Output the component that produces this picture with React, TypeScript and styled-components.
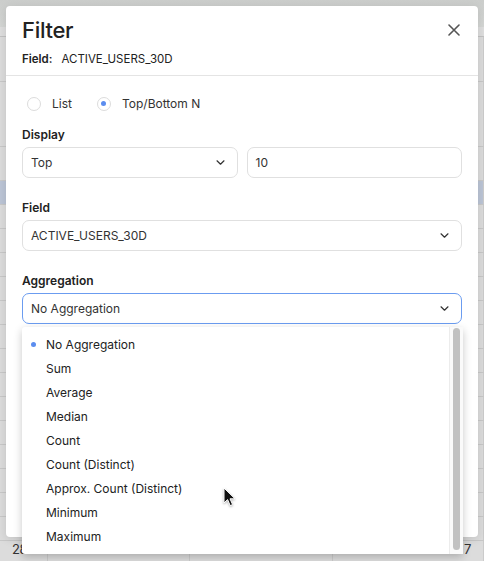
import styled, { createGlobalStyle } from 'styled-components';

const aggregations = [
  'No Aggregation',
  'Sum',
  'Average',
  'Median',
  'Count',
  'Count (Distinct)',
  'Approx. Count (Distinct)',
  'Minimum',
  'Maximum',
];

// rows of the sheet sitting behind the dialog
const sheetRows: { height: number; tone?: 'blue'; first?: string; last?: string }[] = [
  { height: 44 },
  { height: 64 },
  { height: 33 },
  { height: 23, tone: 'blue' },
  { height: 23 },
  { height: 23 },
  { height: 23 },
  { height: 23 },
  { height: 23 },
  { height: 23 },
  { height: 23 },
  { height: 23 },
  { height: 23 },
  { height: 23 },
  { height: 23 },
  { height: 23 },
  { height: 23 },
  { height: 23 },
  { height: 23, first: '2847', last: '7' },
];

const GlobalStyle = createGlobalStyle`
  html, body {
    margin: 0;
    padding: 0;
    background: #dcdcdc;
    font-family: Inter, 'Liberation Sans', sans-serif;
    color: #1f1f1f;
  }
`;

function Chevron() {
  return (
    <svg width="9" height="5" viewBox="0 0 9 5" fill="none">
      <path
        d="M1 0.8l3.5 3.4 3.5-3.4"
        stroke="#333"
        strokeWidth="1.2"
        strokeLinecap="round"
        strokeLinejoin="round"
      />
    </svg>
  );
}

export default function App() {
  return (
    <Screen>
      <GlobalStyle />
      <Sheet>
        <Toolbar />
        {sheetRows.map((row, i) => (
          <SheetRow key={i} $tone={row.tone} style={{ height: row.height }}>
            <Cell>{row.first}</Cell>
            <Cell />
            <Cell />
            <Cell $align="right">{row.last}</Cell>
          </SheetRow>
        ))}
      </Sheet>

      <Dialog>
        <Header>
          <TitleRow>
            <Title>Filter</Title>
            <CloseButton aria-label="Close">
              <svg width="12" height="12" viewBox="0 0 12 12">
                <path
                  d="M1 1l10 10M11 1L1 11"
                  stroke="#555"
                  strokeWidth="1.6"
                  strokeLinecap="round"
                />
              </svg>
            </CloseButton>
          </TitleRow>
          <FieldLine>
            <strong>Field:</strong>
            <span>ACTIVE_USERS_30D</span>
          </FieldLine>
        </Header>

        <Body>
          <Radios>
            <RadioOption>
              <Radio />
              List
            </RadioOption>
            <RadioOption>
              <Radio $checked />
              Top/Bottom N
            </RadioOption>
          </Radios>

          <Group>
            <Label>Display</Label>
            <Pair>
              <Select>
                Top
                <Chevron />
              </Select>
              <Select>10</Select>
            </Pair>
          </Group>

          <Group>
            <Label>Field</Label>
            <Select>
              ACTIVE_USERS_30D
              <Chevron />
            </Select>
          </Group>

          <Group>
            <Label>Aggregation</Label>
            <MenuAnchor>
              <Select $focused>
                No Aggregation
                <Chevron />
              </Select>
              <Menu>
                <MenuItems>
                  {aggregations.map((name, i) => (
                    <MenuItem key={name} $selected={i === 0}>
                      {name}
                    </MenuItem>
                  ))}
                </MenuItems>
                <ScrollTrack>
                  <ScrollThumb />
                </ScrollTrack>
              </Menu>
            </MenuAnchor>
          </Group>
        </Body>
      </Dialog>

      <Pointer width="14" height="20" viewBox="0 0 14 20">
        <path
          d="M1 1v15l3.6-3.4 2.6 6 2.4-1-2.6-5.8H12z"
          fill="#111"
          stroke="#fff"
          strokeWidth="1"
          strokeLinejoin="round"
        />
      </Pointer>
    </Screen>
  );
}

const Screen = styled.div`
  position: relative;
  width: 484px;
  height: 561px;
  overflow: hidden;
`;

const Sheet = styled.div`
  display: flex;
  flex-direction: column;
`;

const Toolbar = styled.div`
  height: 36px;
  border-bottom: 1px solid #c2c2c2;
  background: linear-gradient(#cbcdcb 0, #d4d6d4 27px, #dedede 27px);
`;

const SheetRow = styled.div<{ $tone?: 'blue' }>`
  display: grid;
  grid-template-columns: 48px 142px 143px 1fr;
  border-bottom: 1px solid #c8c8c8;
  background: ${(p) => (p.$tone === 'blue' ? '#bcc5d6' : '#dcdcdc')};
`;

const Cell = styled.div<{ $align?: 'right' }>`
  border-right: 1px solid #cbcbcb;
  font-size: 13px;
  line-height: 14px;
  letter-spacing: -0.4px;
  color: #333;
  padding: 1px ${(p) => (p.$align === 'right' ? '12px' : '0')} 0 12px;
  text-align: ${(p) => (p.$align === 'right' ? 'right' : 'left')};
  overflow: hidden;
  white-space: nowrap;
`;

const Dialog = styled.div`
  position: absolute;
  top: 6px;
  left: 6px;
  width: 472px;
  height: 531px;
  background: #fff;
  border-radius: 4px;
  box-shadow: 0 2px 10px rgba(0, 0, 0, 0.12);
`;

const Header = styled.div`
  padding: 11px 16px 8px;
  border-bottom: 1px solid #e4e4e4;
`;

const TitleRow = styled.div`
  display: flex;
  justify-content: space-between;
  align-items: center;
`;

const Title = styled.h1`
  margin: 0;
  font-size: 22px;
  font-weight: 500;
  letter-spacing: -0.3px;
  line-height: 26px;
  color: #222;
`;

const CloseButton = styled.button`
  border: 0;
  background: none;
  padding: 0;
  margin-right: 2px;
  display: flex;
`;

const FieldLine = styled.div`
  margin-top: 8px;
  display: flex;
  gap: 9px;
  font-size: 11.5px;
  line-height: 16px;
  color: #222;

  strong {
    font-weight: 600;
  }
`;

const Body = styled.div`
  padding: 20px 16px 0;
  display: flex;
  flex-direction: column;
  gap: 22px;
`;

const Radios = styled.div`
  display: flex;
  gap: 25px;
  padding-left: 5px;
  margin-bottom: -6px;
`;

const RadioOption = styled.label`
  display: flex;
  align-items: center;
  gap: 11px;
  font-size: 12px;
  color: #333;
`;

const Radio = styled.span<{ $checked?: boolean }>`
  width: 12px;
  height: 12px;
  border-radius: 50%;
  border: 1px solid #dcdcdc;
  display: flex;
  align-items: center;
  justify-content: center;

  &::after {
    content: '';
    width: 5px;
    height: 5px;
    border-radius: 50%;
    background: ${(p) => (p.$checked ? '#5b8def' : 'transparent')};
  }
`;

const Group = styled.div`
  display: flex;
  flex-direction: column;
  gap: 4px;
`;

const Label = styled.div`
  font-size: 12px;
  font-weight: 600;
  line-height: 16px;
  color: #222;
`;

const Pair = styled.div`
  display: grid;
  grid-template-columns: 1fr 1fr;
  gap: 9px;
`;

const Select = styled.div<{ $focused?: boolean }>`
  height: 29px;
  box-sizing: content-box;
  border: 1px solid ${(p) => (p.$focused ? '#6b9cf0' : '#e0e0e0')};
  border-radius: 7px;
  padding: 0 12px 0 8px;
  display: flex;
  align-items: center;
  justify-content: space-between;
  font-size: 12px;
  color: #333;
`;

const MenuAnchor = styled.div`
  position: relative;
`;

const Menu = styled.div`
  position: absolute;
  top: 34px;
  left: 0;
  right: -1px;
  height: 227px;
  background: #fff;
  border-radius: 3px;
  box-shadow: 0 3px 9px rgba(0, 0, 0, 0.22);
  display: flex;
  z-index: 2;
`;

const MenuItems = styled.ul`
  flex: 1;
  list-style: none;
  margin: 0;
  padding: 5px 0 0;
`;

const MenuItem = styled.li<{ $selected?: boolean }>`
  height: 24px;
  display: flex;
  align-items: center;
  padding-left: 24px;
  position: relative;
  font-size: 12px;
  color: #222;

  &::before {
    content: '';
    display: ${(p) => (p.$selected ? 'block' : 'none')};
    position: absolute;
    left: 9px;
    width: 5px;
    height: 5px;
    border-radius: 50%;
    background: #5b8def;
  }
`;

const ScrollTrack = styled.div`
  width: 14px;
  border-left: 1px solid #ececec;
  background: #fafafa;
  padding: 1px 3px 4px 3px;
  box-sizing: border-box;
  display: flex;
`;

const ScrollThumb = styled.div`
  flex: 1;
  border-radius: 4px;
  background: #c1c1c1;
`;

const Pointer = styled.svg`
  position: absolute;
  left: 223px;
  top: 487px;
  z-index: 3;
  filter: drop-shadow(0 1px 1px rgba(0, 0, 0, 0.3));
`;
